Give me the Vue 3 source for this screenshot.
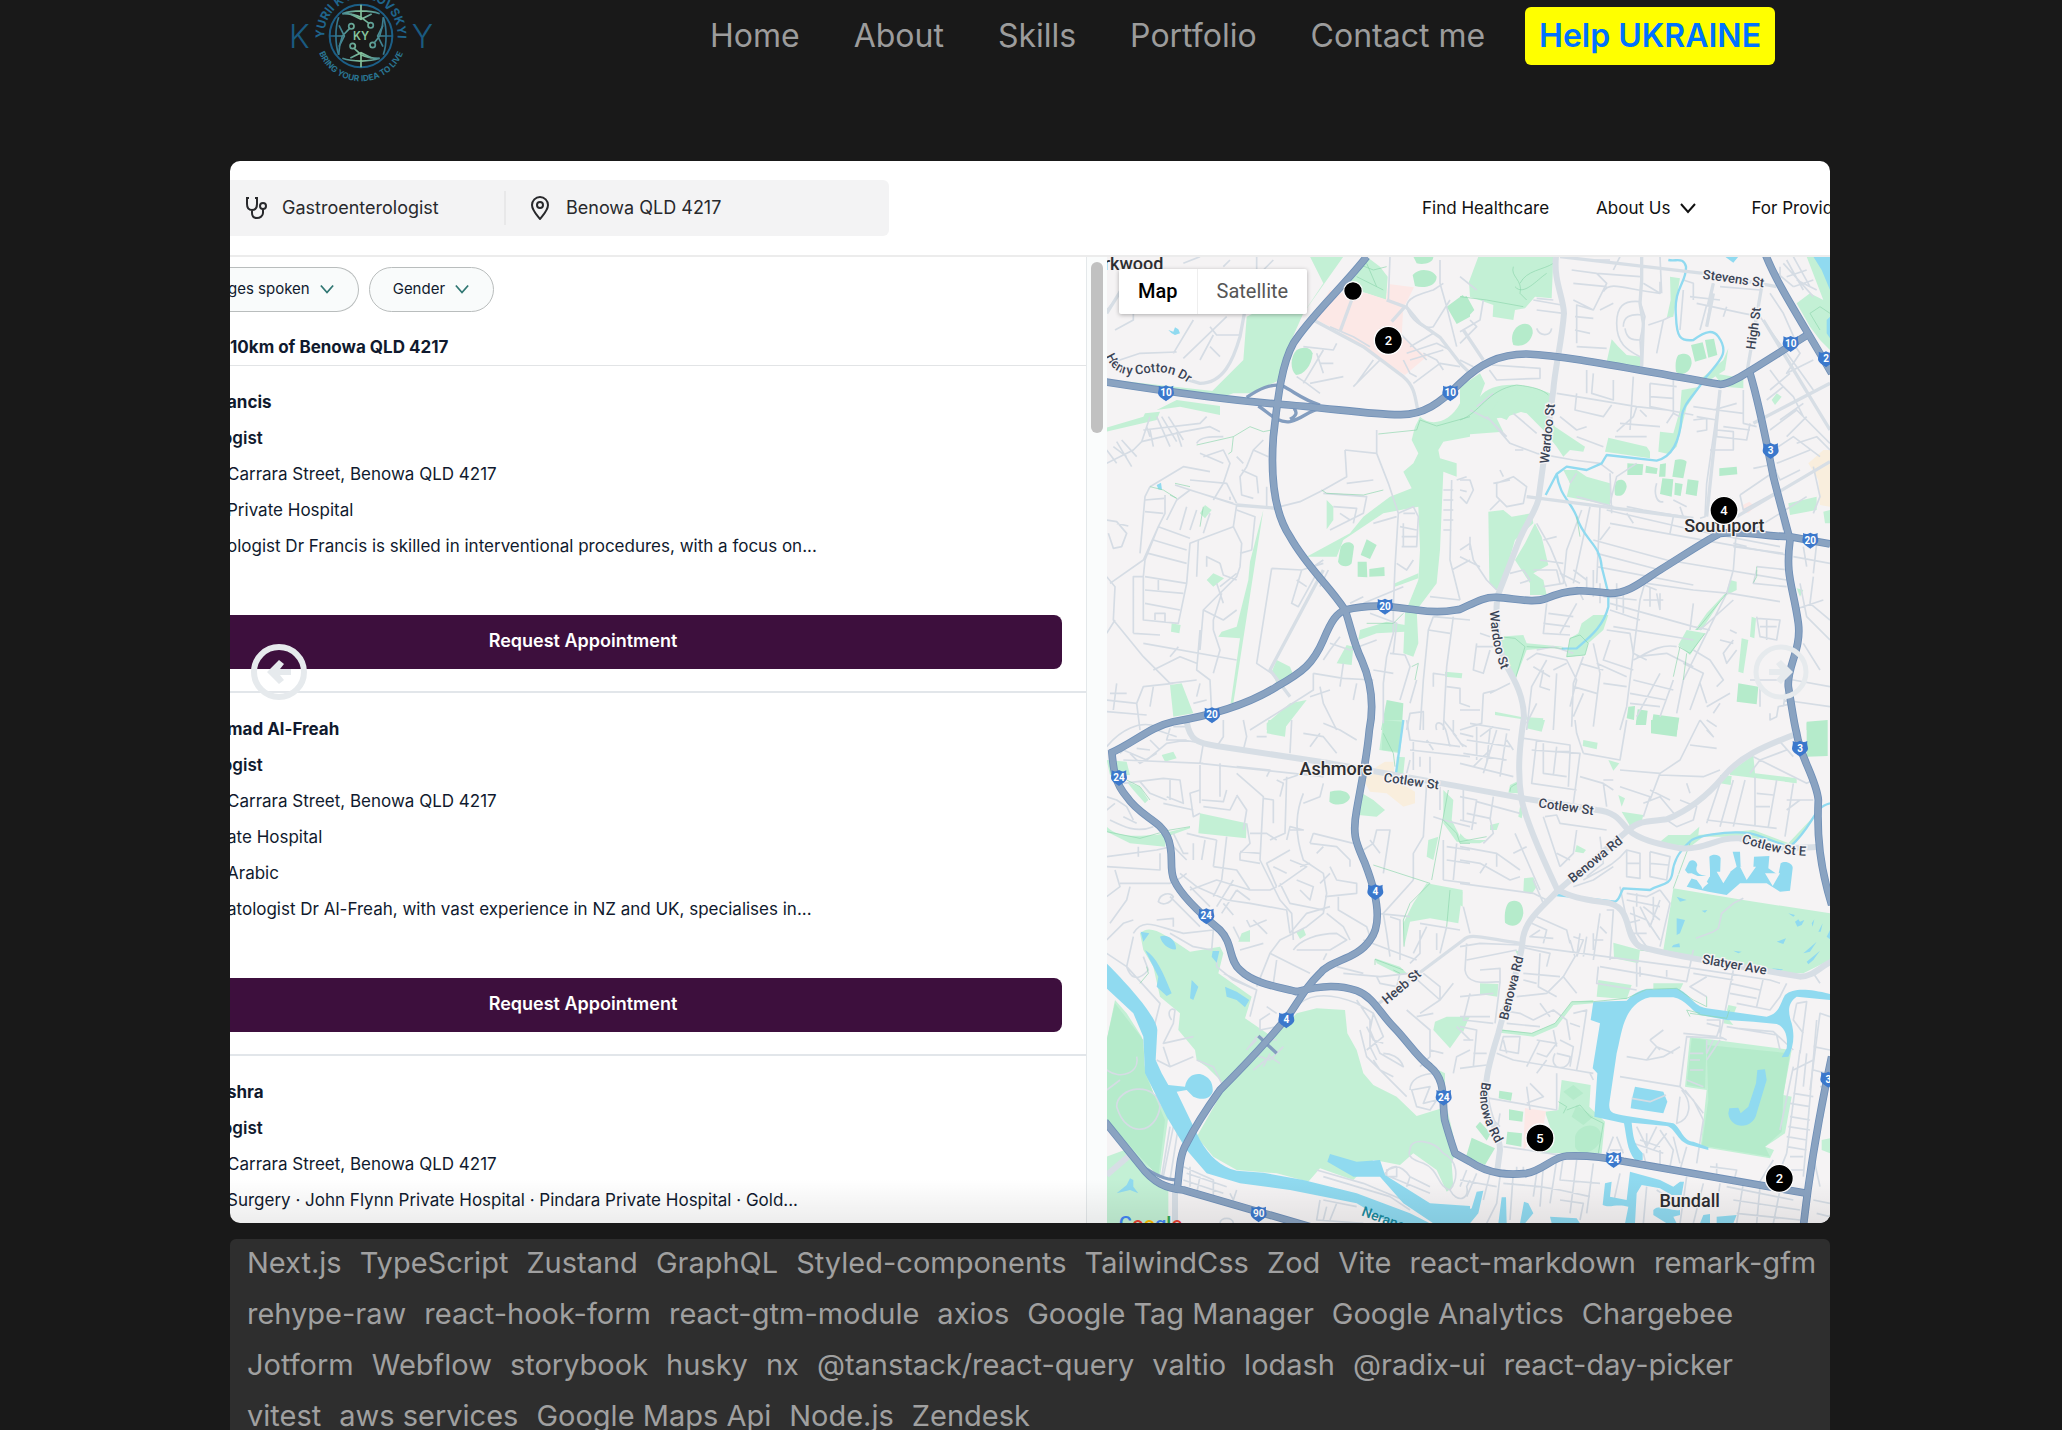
<script setup>
const navLinks = ['Home', 'About', 'Skills', 'Portfolio', 'Contact me']

const doctors = [
  {
    name: 'ancis',
    specialty: 'ogist',
    lines: [
      'Carrara Street, Benowa QLD 4217',
      'Private Hospital',
      'ologist Dr Francis is skilled in interventional procedures, with a focus on...',
    ],
  },
  {
    name: 'mad Al-Freah',
    specialty: 'ogist',
    lines: [
      'Carrara Street, Benowa QLD 4217',
      'ate Hospital',
      'Arabic',
      'atologist Dr Al-Freah, with vast experience in NZ and UK, specialises in...',
    ],
  },
  {
    name: 'shra',
    specialty: 'ogist',
    lines: [
      'Carrara Street, Benowa QLD 4217',
      'Surgery · John Flynn Private Hospital · Pindara Private Hospital · Gold...',
    ],
  },
]

const tags = [
  'Next.js', 'TypeScript', 'Zustand', 'GraphQL', 'Styled-components', 'TailwindCss', 'Zod', 'Vite',
  'react-markdown', 'remark-gfm', 'rehype-raw', 'react-hook-form', 'react-gtm-module', 'axios',
  'Google Tag Manager', 'Google Analytics', 'Chargebee', 'Jotform', 'Webflow', 'storybook', 'husky',
  'nx', '@tanstack/react-query', 'valtio', 'lodash', '@radix-ui', 'react-day-picker', 'vitest',
  'aws services', 'Google Maps Api', 'Node.js', 'Zendesk',
]

// The map is drawn from four tiles; each keeps its own local coordinates.
const tiles = [
  {
    move: 'translate(0 0)',
    parks: [
      'M660 20H760L640 190L600 280L570 390L480 430L360 430L460 330L470 200L490 190H640L700 100Z',
      'M830 20L870 50L893 80L888 150L830 130L770 110L790 60Z',
      'M200 480L260 450L390 468V495L270 470ZM50 533L160 500L165 490L210 485L200 510L50 545ZM50 388L430 430L400 440L60 396Z',
      'M990 500C1020 530 1080 520 1110 460L1140 400V560L1060 575L1045 600L1050 625L1100 640V680L1060 665L1050 900L1040 1000L980 1080L985 1180L970 1220L940 1210L945 1090L985 990L990 900L985 770L880 790L760 870L740 920H650L780 850L820 800L900 740L965 715L940 665L970 640L985 610L965 570L975 530Z',
      'M520 780L495 940L430 1360H422L450 1165L385 1160L395 1145L440 1130L475 990L480 935Z',
      'M710 750L730 770V810L710 838ZM805 1170L810 1140L890 1115L945 1125V1145L860 1150ZM770 1185L790 1190L785 1245L740 1240Z',
      'M560 1230L600 1250L610 1275L560 1300L545 1265ZM240 1305L275 1300L310 1390L250 1400ZM530 1420L600 1360L650 1350L580 1440H530ZM345 765L365 780L345 805L330 790ZM370 970L402 985L370 1010L350 990ZM245 1120L272 1125L268 1150L243 1145Z',
      'M1065 1265L1117 1270L1115 1285L1065 1280ZM915 1000L985 970V985L915 1010Z',
    ],
    groves: [
      'M620 300C640 290 660 290 668 310C665 350 640 375 618 375C600 360 600 320 620 300Z',
      'M968 75C990 50 1030 60 1040 80C1040 110 1000 115 975 108ZM970 20H1030C1030 40 1000 45 980 40Z',
      'M1070 170L1118 135L1140 160V200L1100 222Z',
      'M752 890C765 870 790 875 792 890L785 940C775 955 750 950 744 935Z',
      'M830 868L860 885L840 927L812 915ZM803 935L830 935L832 982L803 980ZM838 957L883 951L884 978L838 980Z',
      'M890 1350L940 1360L935 1440H873Z',
    ],
    waters: ['M235 240L250 245L255 232L265 238L270 250L255 255L245 250ZM200 705L213 698L216 720L205 718Z'],
    lanes: [
      'M50 180C90 140 90 120 100 100M75 240L130 210V190M60 340L150 310L260 306M250 310L310 210M280 325L410 200M360 230L380 255H450M370 255L330 330M360 290L390 320',
      'M330 20L280 40M420 30L400 50M500 20V60M550 30L520 60M870 330L790 410M640 290L730 300L740 280M640 400L700 300M660 400L760 380M620 380L650 400L690 430M850 330L800 400M680 310L700 370M690 340L730 340',
      'M50 640L130 600L155 575L280 545L360 530L390 545M155 575L180 500M160 540L330 520L350 500M70 590L110 620M80 575L125 650M95 570L140 620M50 600L80 640M200 500L240 590M215 500L260 575M235 500L280 570M260 545L275 590M180 560L170 530M190 590L180 540',
      'M340 620L400 600L420 640L400 700L370 750M400 640L330 610M520 570L490 600L470 650L450 680L455 735L490 745M455 660L500 680L505 730M530 710V770M490 600L535 620',
      'M50 810L80 815L110 850L95 890L70 895L55 850M80 820L115 828M180 710L165 740L150 910M165 750L222 745M165 785L220 790M225 735V790L205 830L160 930L60 1000M180 710L280 650L360 665M300 690L410 700L440 760M255 705L440 765L430 830L350 860L300 880L290 1000L265 1120L160 1110L160 980L165 930L205 830L300 865M230 810L260 750L300 720L430 760M290 770L270 840M320 780L300 840M360 790L340 850M190 870L290 900M175 910L290 940M165 980L290 1000M165 1020L280 1030M165 1060L270 1080M205 990V1020M195 1110V1090H225V1115',
      'M440 780L495 800L485 900L450 910M430 830L455 880L450 950L440 980L340 1080L330 1200M325 870L320 980M350 950V920L390 940M390 940L400 975L440 990M380 1000L400 1060M340 1080L400 1110L440 1080M395 1030L370 1110V1140M50 980L75 1010L70 1110L160 1220L240 1300L320 1290M130 1150V980H160M130 1150L210 1155M160 1180L440 1230M265 1190L240 1220M330 1140L320 1260L360 1290L365 1390M370 1140L390 1200L370 1270M75 1110L50 1150M320 1240L270 1220L190 1260',
      'M50 1350L140 1360L160 1310L250 1300M80 1300L70 1380M60 1330L110 1330M50 1385L170 1395M140 1360L150 1440M190 1310L180 1370M310 1360L350 1350M330 1300L320 1340',
      'M860 540V610L895 700L925 790L915 950L910 1070M765 600L860 610M765 600L770 680L700 720L630 755L570 770M770 700L850 690M700 730L830 740L820 790L720 840M730 770L800 775L790 820M750 790L780 810M925 790L970 770L985 800L980 890L935 890M940 790L975 790M930 830L980 840M935 860L980 860M940 820V890M850 820L920 800M920 940L950 960L970 930',
      'M545 955L635 960L700 940M545 955L500 1240L545 1270M635 960L605 1060L625 1070L680 970M620 990L650 1010M715 960L690 1010M700 930L670 950M690 1000L720 1020M820 1060L940 1010M780 1060L820 1040M910 1080V1150L890 1220L880 1300V1420M840 1090L920 1120L910 1210M900 1210L945 1215L960 1250L930 1350M670 1270L760 1285L850 1290M670 1270V1320L560 1390L480 1440M720 1180L780 1200L860 1170M750 1160L720 1200L700 1230M760 1240L750 1310M800 1300L790 1350M690 1310L700 1360L740 1440M850 1260L910 1270M660 1340L720 1320',
      'M1085 690L1080 930L1110 1050M1060 720H1090M1060 750H1090M1060 780H1090M1060 810H1090M1060 840H1085M1100 690L1130 680M1085 960L1140 930M1110 1050L1020 1040M1030 1100L1015 1140L1000 1290L990 1440M1030 1100L1140 1110M1090 1100L1070 1250L1060 1440M1015 1140L1080 1150M1030 1310V1270L1065 1275M980 1290L960 1360M1070 1310L1110 1315V1360L1140 1370M950 1440L960 1390L1000 1385V1440',
      'M950 170C950 140 1000 130 1030 120L1060 100M950 170C960 210 1000 240 1030 230L1080 150M900 20L895 150M1050 30V100L1070 170L1100 290M960 290L1030 250M950 310L1040 280L1080 300M930 250L1010 330M960 330L1060 300M970 400L1050 340L1110 350M940 330L960 370L980 380M1000 310L1040 330L1060 360',
      'M420 750V740M440 970L390 1010M460 640L440 620M320 580C330 560 360 560 400 560M720 230L790 260L840 290',
    ],
    trails: ['M865 552L980 540L990 510L1040 528L1140 500M320 585L430 560L480 530L520 545L545 540M430 560L425 605L415 612M180 710L220 720L260 745L240 735M255 700L300 710M340 770L330 830M695 720L710 730L820 735L880 720M830 1120L910 1120L940 1090M965 1250L985 1240L975 1290M800 40L850 60L890 50M800 80L880 120M830 40L860 110'],
  },
  {
    move: 'translate(1110 0)',
    parks: [
      'M55 20H280L275 145L225 140L195 175L165 180L160 210L98 200L100 165L30 140L27 95Z',
      'M0 410L60 370L75 400L60 440C90 400 180 390 270 430L275 510L250 530L200 480L140 500L110 505L130 545L0 555Z',
      'M90 490L130 430L190 420L240 450L285 530L375 590L370 605L330 600L310 620L290 590L250 540L200 490L160 480L140 510Z',
      'M455 268L475 290L500 315L545 320L540 350L440 335ZM630 80L660 85L640 200L620 205L632 150Z',
      'M805 295L795 360L750 390L725 385L790 330ZM665 420L720 410L680 470L650 590L625 612L595 605L600 545L640 550L660 480ZM760 370L850 385V415L790 410Z',
      'M445 563L560 590L570 605V625L435 605ZM310 660L350 660L380 680L450 700V765L320 740L330 700Z',
      'M1040 20H1110V300L1080 270L1050 230L1010 160L1050 130L1090 150Z',
      'M85 785L130 780L155 800L215 790L220 820L165 870L130 990L110 1020L88 1000ZM165 930L195 880L225 820L245 860L265 945L220 970L250 990L260 1035H210V1000Z',
      'M330 1165L355 1150L365 1120L400 1095L445 1095L430 1140L385 1180L375 1215L320 1222ZM115 1160L190 1155L200 1180L310 1190L200 1200L165 1290L125 1215Z',
      'M655 1185L680 1140L735 1150L690 1215ZM810 990L830 995V1020L790 1040L725 1140H705L740 1090L800 1025ZM845 1165L865 1170L850 1270L835 1265ZM875 1100L888 1105L883 1165L870 1160Z',
      'M985 760L1070 740V780L990 795ZM1090 785L1110 780V820H1095ZM950 430L965 440L945 465L935 450ZM105 1385L180 1400L250 1405L245 1430H205V1410L105 1395ZM1010 1015L1030 1020L1020 1040Z',
    ],
    groves: [
      'M180 225C200 215 220 225 218 250C210 285 180 292 160 285C150 260 160 235 180 225Z',
      'M0 145L20 138L43 180L20 205L0 170ZM655 315C680 305 695 315 695 340C690 370 665 380 648 365C645 345 647 325 655 315Z',
      'M693 285L728 277L740 325L705 335ZM735 270L762 266L772 315L745 323Z',
      'M502 640L550 643L547 675H502ZM558 647L593 655L590 672L556 668ZM600 643L618 640L616 680H597ZM645 630C660 625 675 628 680 635L670 685L637 680ZM607 685L640 688L635 740L600 732ZM645 698L668 702L662 738L643 734ZM683 688L716 692L710 738L677 732Z',
      'M470 693C485 685 498 690 500 710C495 735 480 742 465 735C462 715 463 705 470 693Z',
      'M778 655L830 650L832 673L778 678ZM835 1300L895 1310L890 1363L830 1355ZM505 1370L525 1368L522 1410L500 1405ZM533 1378L563 1382L558 1425L528 1420ZM580 1393L658 1403L652 1440H573ZM1040 1418L1100 1412V1440H1040Z',
    ],
    waters: ['M1060 20H1110V120L1085 60ZM795 20H835L820 38ZM1100 210L1110 200V265L1100 250Z'],
    streams: [
      'M625 30C650 35 670 20 678 50C680 100 640 110 648 200C650 260 660 275 700 270C740 240 760 240 775 260C810 310 780 330 735 385C700 440 670 460 665 500C660 570 640 620 590 632L440 615L425 640L380 660L320 650L290 672L257 735M290 672C300 740 330 750 350 800C370 870 420 880 425 950L445 1030V1070C430 1130 390 1160 350 1195L305 1196',
    ],
    lanes: [
      'M335 60L410 70L540 80M410 70L440 100L400 180M430 125C450 90 500 120 600 130V95M340 100L440 110M340 150L400 180L350 165V280M345 200L400 205M345 240L390 250M350 290L440 295M470 220C470 170 490 150 540 155M470 220C470 280 500 300 540 320M490 230C490 200 510 190 550 195M495 235C500 270 520 270 540 270M420 180L460 160M545 60L540 155L555 200L540 270L545 350M605 130L600 20M600 130L550 100M480 20L460 60M400 30H450',
      'M565 225L610 210L600 260L590 310M610 210L630 200M670 120L660 240M690 140L780 150M710 160L850 190L900 200M760 100L740 230M780 110L900 120M740 165L720 240M800 170L790 200M670 90L700 100V150M930 130L970 190L1010 280M960 50V120M970 40L1060 140M980 30L1030 120M1000 20L1050 110M1010 90L1070 120M940 60L1000 110M980 80L1040 60M1000 110L1060 90',
      'M95 345L240 355V385L110 390L88 360M0 330L40 350M0 245L60 210L70 150M0 280L50 230L30 210M0 80L50 120M220 150L305 165M230 145L280 150M230 180L310 190M230 235C240 260 270 260 275 235M350 430L345 480L430 500L455 465M290 430L350 440L530 470M380 360V430M400 370L395 430L460 450V390M520 380L510 540M570 400V470L700 495M570 400L650 410M640 380V490M570 440L640 445M530 470L620 480M540 480L560 500M620 520L640 490L660 500M480 520L600 530M465 560H560M470 545L520 500L530 470M700 470L770 480L850 490M700 510L740 505V540L710 545M710 500L770 510V560L860 570L870 520M770 540L820 545V600L750 600M780 420L740 700L735 800L720 805M760 480L830 460M790 530L870 540M850 420V520L890 530',
      'M900 200L1010 350L1060 420M920 330L1000 280L1020 310L980 370L1060 330M930 360L960 400L1000 440L1030 500M930 420L990 370M920 450L970 410M960 510L1030 460M930 540L1010 480L1110 580M980 560L1040 500M940 600L1000 560L1080 620M950 640L1050 600M880 655C900 650 920 650 935 640L960 690L1020 660M840 735L950 660M840 735L850 780L960 720M960 790L970 840M1040 740L960 790L880 840M1010 580L1070 560L1110 600M1060 650L1080 740L1060 790',
      'M30 480L90 510L150 580L230 610L340 630L420 640L460 670M80 500L140 560M160 490L230 550M300 500L350 540L380 530M350 560L430 590M50 470L100 430M165 600H190M0 690L30 690L40 720L20 760L0 740M0 720L20 725M110 700L160 680L200 710L190 760L140 770L110 740ZM100 700L150 690M120 750L90 780M130 680L120 660M350 670L330 700M450 670L455 790M450 760L470 680L530 640M590 700C580 730 590 760 610 755M500 770L550 780L670 800M660 770L670 800M640 750L680 770',
      'M420 770L410 1000M390 770L340 1000M365 780L320 900L310 1000L250 1010M440 780L700 840L960 890M450 820L980 915M400 870L620 930L980 990M410 910L600 960M410 950L700 1005M500 790L520 820M640 800L630 850M450 830L420 870M350 740L460 770M340 960L380 990M300 970L360 1000',
      'M0 900L30 880L40 930L80 990L110 1020M0 920L60 950M30 860V900M150 970L190 960L210 990L180 1000M230 820L270 890L320 1010M240 930L310 940M220 960L290 960L300 1000M250 870L290 860',
      'M560 980L540 1050L500 1370L480 1440M560 1000L700 1020L810 1030L960 1055M350 1060L300 1150M260 1060L250 1150L330 1155M265 1090L340 1100M250 1120L330 1130M450 1060L700 1130L750 1140M450 1080L540 1110M460 1130L700 1170M400 960V1040M420 1000V1060M380 980V1020M470 1000V1080M490 1030V1090M540 1000L590 1020M570 1010V1070M590 1030L600 1080M430 1040L530 1050M350 1010L370 1050M550 1050L610 1050M600 1030V1080M700 1060L690 1140M830 830L820 960L800 1030L720 1190L670 1290L650 1390M720 1140L820 1050M890 960L880 1000L980 1010M890 950L990 960M820 890L970 910M860 890L820 880',
      'M440 1140L510 1150L520 1210L560 1230M450 1170L430 1230L520 1260M370 1220L340 1300L335 1430M200 1230L230 1210L320 1230L350 1290L330 1370M200 1440L215 1310L260 1230M290 1270L280 1440M250 1260L240 1310L270 1320M320 1240L280 1260M230 1200L280 1190L340 1210M400 1180L420 1270L400 1430M360 1240L430 1260M410 1240L500 1280M340 1310L410 1330M370 1330L340 1400M430 1300L500 1310M520 1230C560 1210 600 1180 650 1190M530 1220L620 1210L700 1250M520 1290L640 1320M510 1330L620 1350M510 1360L600 1370M600 1270L530 1400M640 1290L600 1400M700 1200L750 1230L790 1290L770 1310M670 1240L730 1270L690 1380M720 1300L740 1360M740 1370L810 1330M760 1390L780 1360M870 1290H1000L1110 1310M900 1370L900 1300M930 1390L930 1410L950 1400L955 1370L1000 1360M970 1350L1110 1370M890 1100L900 1160L950 1170L960 1110L890 1105M900 1130H950M920 1110V1170M820 1170L790 1210L800 1240L830 1200M780 1170L820 1180M810 1140L830 1150M1020 1000L1040 1100L1110 1170M1030 1180L1080 1260M1060 980L1050 1060L1110 1110M1000 1080L1090 1050M980 1310L970 1370',
      'M50 1180L40 1260L70 1270L90 1200M50 1190H100M60 1150L90 1160M70 1330L65 1420L0 1440M70 1330L110 1320M0 1380H60M150 1300L90 1330M230 1360L200 1420M270 1280L220 1250M1030 890L1040 950M1070 880L1060 970M1000 920L1110 940',
    ],
    trails: [
      'M160 50C150 80 190 90 180 130L200 150M180 100C200 60 250 60 280 40M165 110C190 140 230 90 260 70M0 510C60 490 80 420 170 405C220 410 250 420 265 435M890 950V980L880 998M330 1165L360 1155L385 1180L375 1215L320 1220ZM115 1160L165 1165L195 1190L165 1290M200 1190L310 1195M655 1190L690 1210L735 1150M660 1190L640 1280M680 1210L670 1290M1050 190L1080 170L1110 190M1050 190L1080 240M0 140L80 150L190 170M350 800L360 860M800 1030L710 1140',
    ],
  },
  {
    move: 'translate(0 1410)',
    parks: [
      'M150 640C180 610 220 640 300 695L390 680L400 700L385 760L485 830L465 895L560 960L520 1000L400 1090L350 1040L320 1020L315 990L265 930L270 880L210 830L190 740L160 690Z',
      'M620 880L680 865L765 870L772 940L800 990L820 1060L850 1095L920 1130L980 1188L1070 1160L1100 1290L1085 1330L1090 1400L1070 1415L1040 1350L970 1300L930 1335L880 1325L850 1320L790 1380L690 1345L655 1385L560 1360L440 1350L370 1310L320 1250L400 1110Z',
      'M75 840L110 880L155 950L160 1030L190 1120L235 1190L210 1370L150 1310L100 1260L50 1200V960Z',
      'M50 1310L130 1280L200 1370L235 1400V1510H50Z',
      'M330 280L470 310L468 355L325 340ZM50 320C80 350 120 350 200 345L300 320V325L230 350L225 380L120 370L50 335ZM535 0H590L585 50L530 40ZM110 185L150 200L175 240L165 250L130 210ZM215 105L250 95L260 115L225 125ZM50 120L110 125L120 165L60 165Z',
      'M800 210L850 240L885 270L860 290L805 285ZM880 0H940L930 100L868 90ZM920 110L945 112L940 160H920Z',
      'M1010 490L1118 510L1105 610L1020 595L960 605L942 680L940 610L970 550ZM1015 360L1045 350L1030 420L1010 410ZM1060 210L1090 240L1085 300L1110 350L1140 360V370L1100 365L1060 310ZM855 715L930 740L950 760L930 765L860 730Z',
      'M1035 905L1070 890H1140L1115 935L1080 985L1030 930ZM455 640L480 630V665H445ZM618 635L640 625L648 645L630 657ZM1035 1045L1065 1060V1090L1045 1080Z',
    ],
    groves: [
      'M50 960L75 850L160 960L165 1060L225 1200L205 1370L140 1300L50 1200Z',
      'M720 215C750 208 775 212 780 232C775 255 735 260 718 245ZM880 0L935 5L925 95L875 90Z',
    ],
    waters: [
      'M50 730C120 800 200 890 202 930L197 1020L215 1060L235 1095L285 1100C290 1070 310 1060 330 1062C360 1070 370 1090 368 1115C360 1140 330 1140 310 1130L290 1110L260 1115L330 1260C360 1310 390 1340 440 1352L520 1358L640 1380L800 1420L960 1480L1020 1510H900L800 1450L600 1410L450 1390L350 1360L290 1290L230 1190L165 1060L160 950L130 880L50 805Z',
      'M720 1302L800 1325L870 1320L885 1365L1020 1450L1140 1458V1510H1030L940 1450L870 1370L790 1370L712 1325Z',
      'M165 690C200 710 220 760 245 820L230 828L200 800L205 770ZM210 650C230 640 260 660 258 688C235 690 215 670 210 650ZM152 635L178 640L160 665ZM305 780L325 800L310 840L300 835ZM405 800L440 815L478 840L465 862L440 840L410 830ZM368 693H388L380 728L365 710ZM80 1420L110 1395L120 1375L130 1380V1400L145 1420L120 1410Z',
    ],
    streams: ['M940 0L918 160'],
    lanes: [
      'M50 80C90 30 150 0 200 20M90 100L130 60L200 30L260 50M100 90L170 120L230 70L290 60M120 100L150 130L200 100M140 85L180 90M240 25L230 60L290 60M180 60L210 90M280 60L340 70L330 130L700 170M100 120L340 130M250 20H300M400 0V50L380 80M460 0L470 50L460 90M500 50H530M605 0L600 100M640 40L700 50L740 100M660 80L690 40M700 10L750 30L800 60',
      'M100 190L220 175L270 180L280 250L230 230M150 185L180 220L230 240M240 180V240M330 135V250M330 210L300 220L310 290L330 280M335 240L400 245L410 210M390 130V230M440 140L540 150L530 170M440 160L520 230L510 420L570 540L605 580L610 660M520 235L550 240V310M560 180L580 190L570 230M580 180L640 160L700 170M590 170L585 340L540 360M640 220C620 270 610 330 640 420L700 460L710 520L700 580L650 620L570 660L540 700L500 800M440 230L420 270L340 260M440 225L470 270L460 330M50 230L80 240L110 260L130 300M60 300C100 320 140 340 190 320M100 290L140 310M75 250L50 270M220 250L310 270',
      'M50 410L200 390L245 380M50 440L210 450V400M145 380V410M75 450L90 500L50 530M90 490L240 490L270 475L290 460M60 610L110 540L120 500M250 380L290 420M250 340L280 400H295M290 340L330 350L380 360M270 460L320 500L410 540M310 370V420M345 360L335 420M380 360L370 440M410 350L395 480L370 530M300 510L380 480L480 510H540L560 500M370 440L440 450L480 510M380 560L430 480M395 580L440 510M410 540L480 550L590 570L600 640M400 550L430 585M440 510L480 540M470 310L480 370L450 400V420L510 430M450 395L510 400M480 340H530L560 360M560 500L530 430L600 390M565 500L650 440L600 420M570 490L600 550L700 570M600 330H640L600 320L590 360M550 440L590 460M620 480L670 500L660 540L630 510M640 250L690 230L700 190M660 370L740 380L780 420V440M670 340L790 370M670 340L660 370M700 380L680 400M630 440L660 430M720 440L740 480L800 490V520L705 530M745 530V570L830 620L840 650M690 490L720 460M710 580L760 620L780 660',
      'M130 640C160 590 200 620 280 640L370 630L365 690L310 680L240 640M200 600L250 595V620M205 545C210 520 240 515 250 530C240 555 215 555 205 545ZM240 530L330 620M300 500L360 560M50 700L110 740L210 850L190 930M110 740L130 650M110 740C120 770 140 790 175 750L160 710M50 660L100 610L130 600M245 900C230 880 240 860 255 870L250 910L220 970L310 950M220 980L240 1040L310 1010M240 1040L200 1020M320 1020L370 1040L400 1100L450 1060M480 890L500 810L400 760M380 690L380 740L430 780L500 810M530 860L560 880M540 880L510 900V930L560 920M450 690L520 670M490 600L530 640L510 620M470 600L480 620L530 600M610 690C630 660 680 640 740 640L770 660L720 690L620 690M540 700L620 740L660 760M560 720L550 790M430 620L450 660M600 640L650 580L720 560M700 720L710 700M740 740L820 760',
      'M820 390L850 370L860 330L900 330L880 460M840 360L870 400M1010 190L1000 350L970 400V480M970 480L880 580L890 640L900 710M860 580L960 590M900 590L930 600V720M820 660L980 720M760 760L870 770L960 760L1050 840L990 880M860 770L870 790L920 800L930 760M990 630L990 700L960 730M1010 620L970 700M990 610L1110 630M1040 640V690M1070 620L1050 700M1120 560L1140 640M1060 480L1140 490M1060 480V360M1070 420L1140 430M1070 380L1140 390M1120 210V300M950 0L960 60L1110 80M960 90L1140 110M960 120L950 160M970 60V150M990 140V110M1020 110V160M1040 30C1030 0 1060 0 1070 40L1080 80M1060 0L1100 50M1090 0V40L1120 80M1010 60L1030 90M1100 370L1090 480M1030 290L1060 300L1140 320M1050 270V200M1000 760L1050 800V840L1090 790M950 870L1020 930V1010L990 1040M980 890L1030 880M1100 920L1140 960M1090 1060L1100 1010L1140 990M1020 990L1060 1000',
      'M630 850C680 810 750 830 800 850L850 880L880 950L830 990M800 840L820 870L840 900V980L860 1020M830 920L850 960L880 970M850 880L840 930L870 1000L940 1040C930 1010 900 1000 880 1000M810 930L830 1010L950 1130M850 1020L870 1050L910 1070M960 1110C960 1080 990 1060 1040 1060M965 1110L1020 1100L1000 1150L1040 1140L1020 1170L980 1160ZM470 990L500 950L560 960M480 1000L540 1020L580 980M490 1050L540 1010L570 1030M500 960L480 980M540 1000L520 1040',
      'M960 1290C960 1250 1030 1260 1060 1300C1100 1320 1110 1370 1080 1410C1040 1400 1050 1350 1000 1330C970 1320 950 1310 960 1290ZM890 1350L920 1340V1370L890 1370ZM880 1370C900 1330 930 1330 960 1370L1020 1400M900 1370L1020 1420M950 1400L960 1370M1080 1410C1100 1450 1140 1440 1130 1400L1140 1380M680 1350L820 1390L940 1440L1100 1500M700 1370L900 1430L960 1470M690 1440L680 1500L820 1510M700 1440L800 1460M710 1460L700 1500M740 1450L720 1500M250 1220L220 1370M265 1220L240 1380M240 1220L215 1370M280 1340L370 1380V1440M290 1360L410 1400M280 1380L400 1420M300 1340V1400M330 1370L320 1420M420 1420L430 1440L440 1410M390 1510C390 1490 430 1490 430 1510',
      'M80 1160C80 1100 200 1080 210 1160C200 1240 110 1260 80 1160ZM50 1050C90 1080 150 1060 140 1010M50 1110L90 1080',
    ],
    trails: ['M110 180L150 200L180 240M300 320L240 330L150 355L50 335M850 435L1020 490L960 550L940 600L942 680M1025 480L1075 210M1060 300L1100 340L1110 370H1140M1080 510L1070 620M855 735V718L940 750M930 760L910 750M880 40L910 100L915 140M170 740L175 760L150 790'],
  },
  {
    move: 'translate(1110 1410)',
    parks: [
      'M640 505L850 540L1110 580V720L1030 760H960L610 690Z',
      'M810 155L880 105L885 160L1010 175L1005 188L810 165ZM780 165L815 168L812 195L780 190ZM600 365L625 345L690 345L718 320L715 345L880 330L1000 375L940 365L850 350L730 350L690 380L600 370ZM1070 280L1000 375L985 370Z',
      'M485 275L550 285L545 305L510 318ZM475 225L495 235L485 260ZM205 0H255L245 35L200 25ZM370 60L413 68L410 88L368 78ZM445 120L478 130L460 152ZM350 375L378 390L370 400L345 395Z',
      'M192 475L220 472L230 500L215 522L190 515ZM460 668L540 690L535 730L462 715ZM415 780L515 795L500 838L410 830ZM580 790L670 790L660 810L580 808ZM60 790L115 792L112 830L60 822Z',
      'M120 928L215 940L285 910L335 845L400 840V850L340 855L290 920L220 950L120 938ZM305 1080L392 1095L388 1160L435 1205L425 1300L330 1300L240 1300L270 1220L255 1175L295 1170Z',
      'M690 950L995 990L970 1125L995 1130L975 1240L915 1280L942 1290L930 1315L750 1285L722 1280L740 1110L675 1100ZM1085 1260L1110 1255V1300L1085 1290ZM805 855L830 860L820 885L808 900L820 915L790 910Z',
      'M0 340L20 360H80L60 370L0 370ZM90 315L118 308L110 330H90ZM150 195L180 180L175 220L145 218ZM0 510L8 515V560L0 555ZM165 690L180 695L175 710ZM180 260L190 270L185 295L175 290ZM0 900L25 895L10 935L0 930Z',
      'M970 170L1010 178V190L975 185Z',
    ],
    groves: [
      'M150 545C170 538 190 545 190 580C185 620 155 625 135 608C132 580 138 550 150 545ZM1040 5L1103 0V108L1040 110ZM573 0H655L650 50L573 40ZM530 0H558L555 15H527Z',
      'M118 1112L157 1118L153 1142L116 1135ZM147 1168L190 1175L187 1205L147 1200ZM142 1235L186 1240L184 1280L138 1272ZM35 1253L105 1285L75 1335L18 1310ZM60 1205L92 1240L80 1262L47 1220Z',
      'M345 1250C355 1210 420 1200 425 1250C415 1300 355 1310 345 1280ZM310 1115L340 1095L370 1120L340 1140ZM335 1190L350 1155L400 1190L370 1215Z',
      'M740 975L990 1000L970 1125L965 1235L915 1280L930 1310L750 1280L725 1280L745 1140ZM695 955L740 960L735 1105L680 1095Z',
    ],
    waters: [
      'M400 845L500 842C530 810 560 805 580 808L650 805C690 820 700 860 740 865L920 890C960 880 960 850 975 825C1000 805 1040 805 1110 822V840L1010 830C980 850 985 880 995 910C1005 950 1000 980 985 1010L965 1012L980 985C985 940 970 920 950 912L880 905L800 900L720 885C690 870 680 840 640 832H570C530 840 510 870 500 890C485 920 480 960 470 1000L448 1150C445 1180 460 1182 500 1188L640 1210C660 1220 670 1265 700 1265L745 1282V1290L700 1278C650 1270 650 1225 620 1218L515 1208C520 1250 520 1270 548 1300V1320H525C500 1290 500 1250 492 1210L403 1190L412 1060L398 1045L420 910L392 900Z',
      'M685 430C690 415 710 420 712 435C705 450 710 460 725 465L750 470V450L748 410C760 400 780 405 782 415L780 470L805 460L830 440L818 395H840L842 440L880 445L882 410L928 408L925 445L955 465L962 430C975 420 1000 430 998 445L990 512L960 515L920 490L840 490L800 525L745 515L680 500L695 475L675 450Z',
      'M525 1100L610 1115L622 1145L610 1180L512 1165L515 1140Z',
      'M892 1050L915 1048L920 1080L890 1180C880 1230 810 1230 805 1180L808 1165L835 1163L842 1180L865 1160L888 1090Z',
      'M510 1355L600 1380L640 1400L660 1385H672L665 1425H635L600 1405L545 1395L530 1420L525 1510H495L505 1460C470 1450 450 1465 428 1455L435 1390L455 1385L450 1430L500 1440ZM50 1415L70 1412L55 1480L30 1510H0V1480L35 1465ZM125 1432H138L140 1510H115ZM192 1445L205 1450L220 1480L195 1510H180ZM270 1490L350 1495L360 1510H275ZM580 1470C600 1450 630 1475 660 1470V1485L640 1490L650 1510H620L580 1485ZM730 1485L750 1482V1510H720ZM770 1490L830 1485L820 1510H770Z',
      'M650 530L680 540L660 545ZM650 595L675 600L660 640L650 645ZM640 675L658 670L660 682H635ZM725 572L742 570L735 578ZM820 692L845 695L835 700ZM950 665L978 655L970 672ZM1005 605L1015 598L1020 605L1033 600L1025 615L1012 620ZM985 580L1005 585L1000 590ZM1040 725L1080 692L1060 720L1045 733ZM1030 700L1070 665L1050 695ZM935 745L970 748L960 753ZM1055 610L1063 598L1058 620ZM1075 635L1088 610L1082 635ZM1100 650L1110 630V658Z',
    ],
    streams: ['M1110 250C1060 260 1060 320 990 380C950 370 900 345 870 340C800 330 700 350 690 365C650 400 640 430 637 460C630 500 600 490 570 510L490 505C480 520 480 540 465 545L290 525'],
    lanes: [
      'M190 55L330 75V95H280M215 90L360 100L340 250M230 60L215 190L350 210M250 70V160L320 170M290 80L280 165M330 100L325 200M345 0L350 40L370 100M370 100L480 120L500 0M360 170L430 190L440 260M430 180H460M430 190L460 210M600 160L480 150M480 200L570 230L550 290M570 240L600 160L660 120L720 0M600 165L730 170L780 150M690 75L770 85M720 0L760 50L740 30M740 0L770 20M620 300L650 320L700 300L710 260L660 240M550 250L600 230L650 290M570 210L630 240M680 190L690 220',
      'M780 190L740 310M820 180L780 320M855 180L820 320M885 170V320M950 180L925 320M1000 190L975 350M740 300L950 325M885 260H930M890 220L940 225M880 110L1040 190L1060 180M960 65L1000 110M870 160L900 120L980 90M980 240L1060 240M980 270L1020 240',
      'M0 70L20 80M0 40L40 50M30 10L150 30M50 20V120M90 30L80 130M110 30L70 160M140 40L120 170M20 60L150 80M10 100L140 120M0 130L160 170M60 50L100 20M40 140L90 90M140 60L160 90M0 230L50 240L35 330M20 280L90 295L100 340L70 370M100 230L90 300M50 245L180 280M0 300L50 310M0 380L110 400L180 450M0 420L60 430L150 480L180 470M0 490L220 520L260 540M60 460L80 430M110 400V440M165 340L240 510M200 380L160 400M220 480L250 550',
      'M250 290L300 440M255 290L290 285L300 310L440 330M300 440L340 400L350 330M290 400L330 420M420 350L430 430L380 470M370 480C420 450 460 440 500 390M340 500L400 480L460 440M500 390V470L540 475V400ZM500 430H540M570 395V470L620 480L630 410L570 395M570 430L625 435M480 500L500 600L540 680M500 540L600 560M500 520L560 530L600 510M520 560L530 640L560 680M540 560L570 620L600 540M510 580L560 600L600 660M530 520V560M580 530V600M500 610L540 600M550 560L600 600M510 640L560 640M600 510L630 550L600 680',
      'M230 590L320 630L330 670M215 610L260 630L250 670M240 630L210 650L280 655M0 680L60 670L180 675L700 745L930 780L960 790M20 670L15 750C20 790 60 790 120 785L115 830L105 910M60 750L120 745V790M20 720L170 690M0 830L100 820M30 820L10 900L100 910M0 890H90M0 920L50 930L40 1040L0 1045M40 1000H80M40 1040L80 1035M10 960H40M330 660L345 710L310 770L350 820M340 650L370 660L350 710M360 640L350 710M380 650L370 710M400 690V640M420 580L400 720M440 570H460L450 720M400 660H430M420 620L440 640M415 740L410 790L530 810M530 720V800M420 740L680 785L700 690M540 740V770M620 750V770M740 770L690 800L740 830M700 760L820 780M820 750L780 950L800 960M910 775L890 860M810 790L900 810M810 820L890 835M830 850L930 870L960 830L980 790M1060 760L1080 790M1010 850L1040 845L1020 1000M1010 850L1000 900L1030 940M1110 890L1080 880L1050 1110',
      'M180 680L270 700L260 740M190 760L300 770M240 700L235 800L290 830M170 830L260 820L310 770M190 780L230 790M120 870L180 880L220 900L280 870L320 900L330 960M140 910L240 920M240 850L270 890M340 880L380 870L360 1000L350 1050M330 910L360 920M130 950L180 950L175 1000L120 990ZM140 1000L130 960M110 1000L160 1020L340 1050L400 1060M230 960L290 970L260 1010L230 1000M280 930L290 980M300 960L340 980L330 1040M285 1000C260 1050 330 1060 330 1010L290 1000M290 1060V1170M240 960L200 1040M210 1090L250 1130L200 1150M60 1130L290 1170M200 1100L210 1170M260 1020L230 1060M390 1060L400 1080M120 1180L110 1240M130 1280L200 1290L330 1310M100 1200L120 1220',
      'M480 1070L660 1100L680 950L790 955M500 1010L560 1020L590 980L640 1000M570 960L610 930M570 960L600 990M560 1020L610 1010L660 980M740 960V1000L760 960M660 1100L700 1140L730 1200L710 1330M665 1110C700 1150 690 1200 650 1210L660 1130M675 1110L730 1180M670 940L770 950L780 920L740 910M740 900H780V940M800 920L950 945L960 990M830 925L940 935L1000 990M690 1000H730M690 1020H720M690 1050H730M680 1080L730 1100M780 960L740 1020M1020 990L980 1300M1000 1040L960 1230M1040 1000L1030 1100M1060 1020L1000 1050M1000 1120L1060 1130M990 1150L1050 1160M990 1190L1050 1200M985 1220L1050 1230M980 1250L1040 1260M980 1280L1040 1290M990 1310L1030 1310M990 1350L1030 1350M1070 900L1030 1370M940 1320L890 1400M980 1300L940 1400M1060 1050L1100 1060M1060 980L1110 990M1080 1100H1110M960 1400L950 1370M1090 1180L1060 1310L1080 1400',
      'M530 1220L560 1280L590 1220M540 1260L600 1280M560 1240V1300M580 1290L620 1240M600 1230L640 1290L630 1340M520 1270L610 1300M550 1300L560 1340M600 1290V1340M640 1250L660 1330M460 1250L440 1300M470 1250L490 1300M450 1290H490M680 1280L660 1350M750 1340L830 1350L820 1390M760 1370L810 1380M770 1330V1370M120 1370L110 1450L80 1510M130 1350L160 1355L150 1500M170 1340V1360H190V1340M230 1360L220 1430M250 1340L240 1460M290 1320L270 1450M310 1310L300 1380L420 1390M130 1390L240 1400L300 1410L390 1430M350 1320L330 1480M400 1330L380 1480M20 1350L0 1400M50 1360L20 1430M90 1360L70 1440M0 1380L110 1400M300 1440L370 1450L360 1500M560 1400L550 1510M680 1370L660 1510M730 1390L700 1510M780 1390L770 1460M800 1400L1000 1440M850 1390L830 1510M900 1400L890 1510M960 1410L940 1510M820 1440L1020 1470M830 1480L1020 1500M1060 1440L1110 1450M1070 1480L1110 1490M590 1410L620 1430M480 1360L460 1450',
    ],
    trails: ['M640 505L690 370M120 930L215 940L285 910L335 845L400 845L500 835L560 808L650 805L700 840L740 860V830M690 880L800 895L808 870M720 880L680 870L690 890M295 1145L320 1160L310 1180M320 1170L360 1155L390 1190L430 1210L415 1300M150 215C150 190 170 200 180 180M0 365L80 350M540 690L620 700M505 335L600 370L690 385L840 350'],
  },
]

const streets = [
  'M1398 20C1390 90 1420 140 1422 190C1415 280 1395 350 1390 420L1345 750C1330 800 1300 830 1280 890L1222 1040C1215 1110 1220 1180 1245 1240C1280 1300 1300 1340 1302 1400C1290 1480 1280 1560 1295 1650C1310 1720 1360 1830 1400 1915C1440 1945 1500 1950 1560 1960C1630 1980 1600 2060 1650 2090C1720 2110 1760 2115 1810 2125L2130 2180C2170 2180 2190 2150 2225 2135',
  'M290 1415C300 1470 320 1480 380 1488L720 1540L1110 1610L1300 1645L1520 1680C1580 1685 1595 1720 1615 1740C1650 1770 1700 1780 1770 1795C1850 1800 1880 1760 1950 1765C2040 1800 2120 1795 2190 1790',
  'M2110 1455C2020 1490 1950 1520 1900 1580C1850 1640 1800 1680 1730 1708C1680 1715 1650 1710 1615 1740L1400 1925C1360 1970 1300 2010 1297 2080C1290 2150 1250 2250 1225 2350C1200 2430 1180 2500 1190 2550C1200 2620 1230 2650 1230 2700L1222 2760',
  'M255 2800V2930M50 2775L120 2715',
]

const byways = [
  'M860 2265L1120 2070C1140 2050 1160 2060 1290 2080M670 210L820 290L940 380C975 410 975 440 985 490M785 150L750 245M890 150L950 172L990 220L1050 262L1110 340L1150 380',
  'M2015 110L1972 360M2020 210L2220 540M1310 740L1810 805M1940 800L2220 635M1990 520L2220 400M1410 20L1840 70L2060 110M700 960L540 1260L600 1340M440 765L560 775L570 770M465 180L450 260C430 330 400 400 330 400L280 385M1655 20V90L1650 160L1660 220L1655 350M905 215L945 170M50 190L100 110M1855 165L1870 100M1850 230L1870 130M1120 240L1180 330',
  'M1890 420L1850 800',
]

const highways = [
  'M40 395C200 420 400 450 560 462S850 495 930 494C1000 495 1050 460 1110 400C1170 340 1230 312 1310 312C1440 318 1610 355 1890 403C1920 405 1960 375 2160 250',
  'M830 20C760 110 660 200 610 280C570 350 560 480 550 560C540 700 560 800 600 860C650 950 720 1010 765 1080C780 1120 790 1180 815 1230C850 1310 850 1380 838 1440C830 1530 810 1620 800 1680C785 1760 800 1780 825 1840C860 1930 880 2020 840 2070C800 2130 720 2130 690 2170C650 2210 640 2230 600 2290C530 2380 440 2470 390 2520C340 2590 310 2640 290 2680C270 2710 268 2760 262 2815',
  'M60 1510C130 1480 180 1430 250 1415C370 1395 480 1360 560 1310C640 1265 670 1240 700 1170C725 1110 740 1090 765 1080C850 1060 900 1070 980 1080C1060 1092 1090 1080 1110 1078C1150 1060 1180 1040 1220 1042C1280 1046 1330 1060 1370 1045C1440 1015 1480 1020 1560 1030C1620 1030 1660 990 1710 960C1790 910 1850 870 1890 850C1960 840 2020 860 2100 860L2220 882',
  'M65 1500C70 1560 75 1600 110 1640C150 1700 210 1710 232 1760C255 1810 235 1850 252 1890C270 1930 330 1990 390 2040C430 2080 415 2130 450 2160C490 2200 560 2210 620 2225C700 2205 750 2205 800 2222C850 2240 870 2290 910 2330C950 2370 980 2420 1020 2450C1070 2490 1055 2550 1064 2610C1075 2650 1085 2680 1095 2710L1140 2735C1200 2775 1260 2775 1310 2770C1360 2760 1390 2720 1430 2718C1500 2715 1560 2725 1600 2734L2150 2830',
  'M1980 370C2010 470 2030 580 2050 680C2070 760 2090 830 2100 870C2085 980 2110 1010 2125 1120C2135 1200 2090 1250 2095 1310C2110 1400 2112 1420 2120 1450C2130 1520 2180 1590 2185 1650C2180 1760 2190 1850 2225 1965',
  'M2025 10C2060 100 2120 190 2225 370',
  'M2225 2420C2195 2560 2160 2750 2140 2930',
  'M45 2615L150 2745C190 2800 230 2815 280 2820L660 2930',
]

const ramps = 'M470 442C510 415 540 402 575 406C620 430 640 450 690 465M505 468C540 490 560 520 600 515C640 505 650 485 690 475M612 475C625 490 615 500 600 508M505 2358L560 2410M140 2740C190 2770 220 2790 262 2790'

const shields = [
  [228, 428, '10'], [1081, 428, '10'], [885, 1068, '20'], [366, 1394, '20'], [2102, 280, '10'],
  [2208, 326, '2'], [2042, 601, '3'], [2161, 870, '20'], [87, 1582, '24'], [349, 1997, '24'],
  [856, 1925, '4'], [589, 2309, '4'], [1061, 2541, '24'], [506, 2891, '90'], [2130, 1494, '3'],
  [1571, 2728, '24'], [2215, 2487, '3'],
]

const roadNames = [
  [1837, 86, 8, 'Stevens St'], [1995, 300, -82, 'High St'], [1376, 642, -84, 'Wardoo St'],
  [880, 1595, 8, 'Cotlew St'], [1344, 1672, 8, 'Cotlew St'], [1448, 1900, -39, 'Benowa Rd'],
  [1835, 2140, 10, 'Slatyer Ave'], [1253, 2312, -76, 'Benowa Rd'], [890, 2264, -40, 'Heeb St'],
]

const curvedNames = [
  ['henry', 'M48 318C82 400 150 368 200 366C240 367 270 380 310 410', 'Henry Cotton Dr'],
  ['wardoo', 'M1199 1083C1205 1140 1205 1190 1240 1275', 'Wardoo St'],
  ['cotlew', 'M1954 1778C2010 1795 2070 1815 2160 1818', 'Cotlew St E'],
  ['benowa', 'M1176 2495C1160 2560 1180 2620 1228 2700', 'Benowa Rd'],
]

const pins = [[895, 271, '2'], [1902, 781, '4'], [1350, 2664, '5'], [2068, 2785, '2']]
</script>

<template>
  <div class="page">
    <header class="site-header">
      <a class="logo" href="#" aria-label="K Y">
        <span>K</span>
        <svg class="emblem" viewBox="0 0 300 300" aria-hidden="true">
          <defs>
            <path id="ring-top" d="M41 162A110 110 0 1 1 259 162" />
            <path id="ring-bottom" d="M14 150A136 136 0 0 0 286 150" />
            <linearGradient id="glow" gradientUnits="userSpaceOnUse" x1="60" y1="150" x2="150" y2="150" spreadMethod="reflect">
              <stop offset="0" stop-color="#1f648c" />
              <stop offset="1" stop-color="#86c49d" />
            </linearGradient>
          </defs>
          <circle cx="150" cy="150" r="94" class="globe" />
          <g class="circuit">
            <path d="M150 56V94M94 83C125 72 175 72 206 83M118 84L150 100L182 84M150 94L174 112" />
            <path d="M150 244V206M94 217C125 228 175 228 206 217M118 216L150 200L182 216M150 206L130 188" />
            <path d="M56 150H94M83 94C72 125 72 175 83 206M84 118L100 150L84 182M94 150L116 127" />
            <path d="M244 150H206M217 94C228 125 228 175 217 206M216 118L200 150L216 182M206 150L190 170" />
            <path d="M94 83C130 84 150 94 150 94M206 217C170 216 150 206 150 206M83 206C84 176 94 150 94 150M217 94C216 124 206 150 206 150" />
            <circle cx="179" cy="118" r="8" /><circle cx="121" cy="121" r="8" />
            <circle cx="125" cy="180" r="8" /><circle cx="185" cy="177" r="8" />
          </g>
          <text class="mono" x="150" y="161" text-anchor="middle">KY</text>
          <text class="ring"><textPath href="#ring-top" startOffset="50%" text-anchor="middle">YURII KYRYLOVSKYI</textPath></text>
          <text class="ring small"><textPath href="#ring-bottom" startOffset="50%" text-anchor="middle">BRING YOUR IDEA TO LIVE</textPath></text>
        </svg>
        <span>Y</span>
      </a>
      <nav class="site-nav">
        <a v-for="link in navLinks" :key="link" href="#">{{ link }}</a>
        <a class="help" href="#">Help UKRAINE</a>
      </nav>
    </header>

    <main class="project">
      <section class="slide">
        <div class="top-bar">
          <div class="search">
            <label class="field field-what">
              <svg viewBox="0 0 24 24" width="24" height="24" class="icon">
                <path d="M5 2H3V8C3 12 5 14 8 14S13 12 13 8V2H11M8 14V17C8 20 10 22 13 22S19 20 19 17V13" />
                <circle cx="19" cy="10" r="3" />
              </svg>
              <input type="text" value="Gastroenterologist" aria-label="Specialty" />
            </label>
            <label class="field">
              <svg viewBox="0 0 24 24" width="24" height="24" class="icon">
                <path d="M12 23C8 18 4 14 4 9A8 8 0 0 1 20 9C20 14 16 18 12 23Z" />
                <circle cx="12" cy="9" r="3" />
              </svg>
              <input type="text" value="Benowa QLD 4217" aria-label="Location" />
            </label>
          </div>
          <nav class="top-links">
            <a href="#">Find Healthcare</a>
            <a href="#" class="about">
              About Us
              <svg viewBox="0 0 16 16" width="16" height="16" class="icon"><path d="M1 4L8 12L15 4" /></svg>
            </a>
            <a href="#">For Providers</a>
          </nav>
        </div>

        <div class="content">
          <div class="results">
            <div class="filters">
              <button type="button" class="pill pill-cut">
                ges spoken
                <svg viewBox="0 0 16 16" width="14" height="14" class="icon"><path d="M1 4L8 12L15 4" /></svg>
              </button>
              <button type="button" class="pill">
                Gender
                <svg viewBox="0 0 16 16" width="14" height="14" class="icon"><path d="M1 4L8 12L15 4" /></svg>
              </button>
            </div>
            <h2>10km of Benowa QLD 4217</h2>
            <article v-for="doctor in doctors" :key="doctor.name" class="doctor">
              <h3>{{ doctor.name }}</h3>
              <p class="specialty">{{ doctor.specialty }}</p>
              <p v-for="line in doctor.lines" :key="line">{{ line }}</p>
              <button type="button" class="request">Request Appointment</button>
            </article>
          </div>
          <div class="scroll-track"><div class="scroll-thumb"></div></div>

          <div class="map">
            <svg class="map-art" viewBox="51 21 2169 2898" preserveAspectRatio="xMidYMid slice">
              <rect x="0" y="0" width="2300" height="3000" fill="#f5f3f4" />
              <g v-for="tile in tiles" :key="'land' + tile.move" :transform="tile.move">
                <path v-for="d in tile.parks" :key="d" :d="d" fill="#c3f0d5" />
                <path v-for="d in tile.groves" :key="d" :d="d" fill="#b5ebcb" />
              </g>
              <path d="M755 130L830 130L940 165L935 260L1010 320L945 375L860 320L750 245L670 205L720 120ZM895 102L972 112L945 165L888 148ZM1958 765L1978 755L1995 770L1975 790L1958 785ZM1305 2574L1368 2584L1360 2630L1300 2700Z" fill="#fce8e6" />
              <path d="M820 1590L860 1550L885 1535L910 1535L915 1590L975 1625V1660L940 1670L890 1630L840 1625ZM2155 640L2200 600H2220V770L2190 765L2185 690Z" fill="#f9eedd" />
              <g v-for="tile in tiles" :key="'roads' + tile.move" :transform="tile.move">
                <path v-for="d in tile.lanes" :key="d" :d="d" class="lane" />
                <path v-for="d in tile.waters" :key="d" :d="d" fill="#90daf0" />
                <path v-for="d in tile.streams" :key="d" :d="d" class="stream" />
                <path v-for="d in tile.trails" :key="d" :d="d" class="trail" />
              </g>
              <path d="M1760 1872L1805 1870L1838 1885L1855 1900L1838 1915L1820 1890ZM1820 1878H1860L1838 1918ZM1880 1865H1922L1900 1900ZM1950 1850H1998L1970 1890ZM2025 1870H2070L2048 1908Z" fill="#f5f3f4" />
              <path d="M1625 2545L1680 2555L1728 2535M1818 2065L1870 2045L1885 2035L1895 1990L1930 1960L1960 1945" class="lane" />
              <path v-for="d in byways" :key="d" :d="d" class="byway" />
              <path v-for="d in streets" :key="d" :d="d" class="street" />
              <path :d="ramps" class="ramp" />
              <path v-for="d in highways" :key="'e' + d" :d="d" class="highway-edge" />
              <path v-for="d in highways" :key="d" :d="d" class="highway" />

              <g v-for="[x, y, label] in shields" :key="x + '-' + y" :transform="`translate(${x} ${y})`">
                <path d="M-22 -21C-14 -16 -8 -17 0 -22C8 -17 14 -16 22 -21C20 -12 24 -4 24 2C22 14 10 18 0 26C-10 18 -22 14 -24 2C-24 -4 -20 -12 -22 -21Z" fill="#3b78cc" />
                <text class="shield" y="11" text-anchor="middle">{{ label }}</text>
              </g>

              <text v-for="[x, y, turn, label] in roadNames" :key="x + label" class="road-name" :transform="`translate(${x} ${y}) rotate(${turn})`">{{ label }}</text>
              <g v-for="[id, d, label] in curvedNames" :key="id">
                <path :id="id" :d="d" fill="none" />
                <text class="road-name"><textPath :href="'#' + id">{{ label }}</textPath></text>
              </g>
              <text class="river" transform="translate(812 2896) rotate(20)">Nerang River</text>
              <text class="place" x="220" y="60" text-anchor="end">Parkwood</text>
              <text class="place" x="1903" y="847" text-anchor="middle">Southport</text>
              <text class="place" x="738" y="1575" text-anchor="middle">Ashmore</text>
              <text class="place" x="1799" y="2872" text-anchor="middle">Bundall</text>
              <text class="google" x="86" y="2942"><tspan fill="#4285f4">G</tspan><tspan fill="#ea4335">o</tspan><tspan fill="#fbbc05">o</tspan><tspan fill="#4285f4">g</tspan><tspan fill="#34a853">l</tspan><tspan fill="#ea4335">e</tspan></text>

              <circle cx="789" cy="123" r="28" class="pin" />
              <g v-for="[x, y, label] in pins" :key="'p' + x">
                <circle :cx="x" :cy="y" r="42" class="pin" />
                <text class="pin-count" :x="x" :y="y + 14" text-anchor="middle">{{ label }}</text>
              </g>
            </svg>
            <div class="map-type">
              <button type="button" class="active">Map</button>
              <button type="button">Satellite</button>
            </div>
          </div>
        </div>

        <button type="button" class="arrow arrow-prev" aria-label="Previous">
          <svg viewBox="0 0 56 56" width="56" height="56">
            <circle cx="28" cy="28" r="25" fill="none" stroke="#e6eaed" stroke-width="6" />
            <path d="M16 28L28 16L33 20L29 25H40V31H29L33 36L28 40Z" fill="#e6eaed" />
          </svg>
        </button>
        <button type="button" class="arrow arrow-next" aria-label="Next">
          <svg viewBox="0 0 56 56" width="56" height="56">
            <circle cx="28" cy="28" r="25" fill="none" stroke="#e6eaed" stroke-width="5" />
            <path d="M40 28L28 40L23 36L27 31H16V25H27L23 20L28 16Z" fill="#e6eaed" />
          </svg>
        </button>
      </section>

      <ul class="tags">
        <li v-for="tag in tags" :key="tag">{{ tag }}</li>
      </ul>
    </main>
  </div>
</template>

<style>
body {
  margin: 0;
  background: #191919;
}
</style>

<style scoped>
.page {
  height: 100vh;
  overflow: hidden;
  background: #191919;
  font-family: Inter, sans-serif;
}

.site-header {
  display: flex;
  align-items: center;
  justify-content: space-between;
  max-width: 1486px;
  height: 72px;
  margin: 0 auto;
  padding-left: 2px;
}

.logo {
  display: flex;
  align-items: center;
  gap: 1px;
  color: #1a5a80;
  font-size: 32px;
  font-weight: 300;
  text-decoration: none;
}

.emblem {
  width: 100px;
  height: 100px;
  overflow: visible;
}

.globe {
  fill: none;
  stroke: #1c5f87;
  stroke-width: 6;
}

.circuit {
  fill: none;
  stroke: url(#glow);
  stroke-width: 5;
}

.mono {
  fill: #86c49d;
  font: 600 34px Inter, sans-serif;
}

.ring {
  fill: #1f648c;
  font: 700 36px Inter, sans-serif;
}

.ring.small {
  fill: #2a7593;
  font-size: 25px;
}

.site-nav {
  display: flex;
  gap: 26px;
}

.site-nav a {
  padding: 0 14px;
  border-radius: 6px;
  color: #9c9c9c;
  font-size: 32px;
  line-height: 58px;
  text-decoration: none;
}

.site-nav .help {
  background: #ffff00;
  color: #0072ff;
  font-weight: 600;
}

.project {
  max-width: 1600px;
  margin: 0 auto;
  padding: 89px 2px 0 0;
}

.slide {
  position: relative;
  display: flex;
  flex-direction: column;
  aspect-ratio: 1600 / 1062;
  overflow: hidden;
  border-radius: 10px;
  background: #fff;
  color: #101a2e;
  font-size: 17px;
}

.slide::after {
  position: absolute;
  inset: auto 0 0;
  height: 44px;
  background: linear-gradient(transparent, rgba(0, 0, 0, 0.07));
  content: '';
  pointer-events: none;
}

.top-bar {
  display: flex;
  justify-content: space-between;
  align-items: center;
  flex: none;
  height: 94px;
  border-bottom: 2px solid #ececec;
}

.search {
  display: flex;
  align-items: center;
  width: 659px;
  height: 56px;
  border-radius: 0 6px 6px 0;
  background: #f3f3f4;
}

.field {
  display: flex;
  align-items: center;
  gap: 14px;
  padding-left: 22px;
}

.field-what {
  width: 260px;
  height: 34px;
  padding-left: 14px;
  border-right: 2px solid #e8e8e9;
}

.icon {
  flex: none;
  fill: none;
  stroke: currentColor;
  stroke-width: 2;
}

.field input {
  min-width: 0;
  padding: 0 0 2px;
  border: 0;
  background: none;
  color: #28292c;
  font: 18px Inter, sans-serif;
}

.field .icon {
  color: #28292c;
}

.top-links {
  display: flex;
  gap: 47px;
  width: 408px;
  white-space: nowrap;
}

.top-links a {
  color: #111;
  text-decoration: none;
}

.top-links .about {
  display: flex;
  align-items: center;
  gap: 10px;
  margin-right: 8px;
}

.content {
  display: flex;
  flex: 1;
  min-height: 0;
}

.results {
  flex: 856;
  min-width: 0;
  overflow: hidden;
}

.filters {
  display: flex;
  gap: 10px;
  padding-top: 10px;
}

.pill {
  display: flex;
  align-items: center;
  gap: 10px;
  height: 45px;
  padding: 0 24px 2px 23px;
  border: 1px solid #b9bdbd;
  border-radius: 23px;
  background: #f9fbfb;
  color: #101a2e;
  font: 15px Inter, sans-serif;
}

.pill .icon {
  color: #2f7672;
}

.pill-cut {
  margin-left: -2px;
  padding-left: 0;
  border-left: 0;
  border-radius: 0 23px 23px 0;
}

h2,
h3,
p {
  margin: 0;
  font-size: 17px;
  line-height: 36px;
  white-space: nowrap;
}

h2,
h3 {
  font-weight: 700;
}

h2 {
  padding: 17px 0 0;
  border-bottom: 1px solid #e2e4e6;
}

.doctor {
  padding: 18px 24px 22px 0;
  border-bottom: 2px solid #e2e6ea;
}

.doctor h3,
.doctor p {
  margin-left: -3px;
}

.doctor .specialty {
  margin-left: -8px;
  font-weight: 600;
}

.request {
  display: block;
  width: calc(100% + 126px);
  height: 54px;
  margin: 51px 0 0 -126px;
  padding: 0 0 4px;
  border: 0;
  border-radius: 8px;
  background: #3d0f3d;
  color: #fff;
  font: 600 18px Inter, sans-serif;
}

.scroll-track {
  flex: none;
  width: 20px;
  border-left: 1px solid #e4e8ea;
  background: #fafcfc;
}

.scroll-thumb {
  width: 12px;
  height: 171px;
  margin: 5px auto;
  border-radius: 6px;
  background: #c1c1c1;
}

.map {
  position: relative;
  flex: 723;
  min-width: 0;
  overflow: hidden;
}

.map-art {
  display: block;
  width: 100%;
  height: 100%;
}

.map-art path,
.map-art circle {
  stroke-linejoin: round;
}

.lane,
.byway,
.street,
.stream,
.trail,
.ramp,
.highway,
.highway-edge {
  fill: none;
}

.lane {
  stroke: #d5dce4;
  stroke-width: 5;
}

.byway {
  stroke: #d7dee5;
  stroke-width: 10;
}

.street {
  stroke: #d7dee5;
  stroke-width: 18;
}

.stream {
  stroke: #90daf0;
  stroke-width: 7;
}

.trail {
  stroke: #8ed6ae;
  stroke-width: 2;
}

.ramp {
  stroke: #839dbf;
  stroke-width: 10;
}

.highway-edge {
  stroke: #6f8fb7;
  stroke-width: 23;
}

.highway {
  stroke: #8aa3c1;
  stroke-width: 18;
}

.shield {
  fill: #fff;
  font: 700 30px Roboto, sans-serif;
}

.road-name,
.place {
  fill: #3a4354;
  stroke: #f5f3f4;
  stroke-width: 8px;
  paint-order: stroke;
  font: 500 39px Roboto, sans-serif;
}

.place {
  fill: #2d2e31;
  font-size: 54px;
}

.river {
  fill: #1c8a9e;
  font: 500 42px Roboto, sans-serif;
}

.google {
  font: 500 60px Roboto, sans-serif;
}

.pin {
  fill: #000;
  stroke: #fff;
  stroke-width: 4;
}

.pin-count {
  fill: #fff;
  font: 500 39px Roboto, sans-serif;
}

.map-type {
  position: absolute;
  top: 12px;
  left: 12px;
  display: flex;
  border-radius: 2px;
  background: #fff;
  box-shadow: 0 1px 4px rgba(0, 0, 0, 0.3);
}

.map-type button {
  height: 45px;
  padding: 0 19px 1px;
  border: 0;
  background: none;
  color: #565656;
  font: 20px Roboto, sans-serif;
}

.map-type .active {
  border-right: 1px solid #eee;
  color: #000;
  font-weight: 500;
}

.arrow {
  position: absolute;
  top: calc(50% - 48px);
  width: 56px;
  height: 56px;
  padding: 0;
  border: 0;
  background: none;
}

.arrow-prev {
  left: 21px;
}

.arrow-next {
  right: 21px;
}

.tags {
  display: flex;
  flex-wrap: wrap;
  gap: 4px 18px;
  margin: 16px 0 0;
  padding: 0 8px 8px 17px;
  border-radius: 6px;
  background: #2e2e2e;
  color: #a0a0a0;
  font-size: 29px;
  line-height: 47px;
  list-style: none;
}
</style>
